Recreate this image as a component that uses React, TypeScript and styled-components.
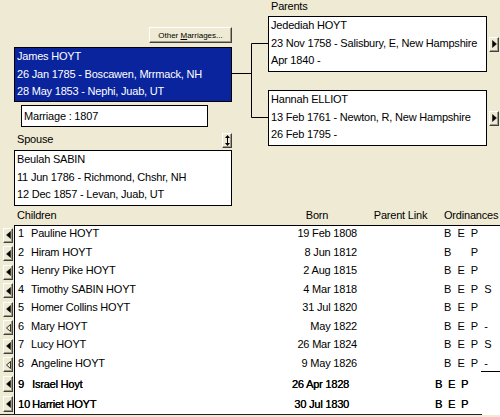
import React, {FC} from 'react';
import styled, {createGlobalStyle} from 'styled-components';

const GlobalStyle = createGlobalStyle`
  html, body {
    margin: 0;
    padding: 0;
    background: #efead3;
  }
`

interface Child {
    n: number;
    name: string;
    born: string;
    ord: string[];
    hollow?: boolean;
    cut?: boolean;
}

const children: Child[] = [
    {n: 1, name: 'Pauline HOYT', born: '19 Feb 1808', ord: ['B', 'E', 'P']},
    {n: 2, name: 'Hiram HOYT', born: '8 Jun 1812', ord: ['B', '', 'P']},
    {n: 3, name: 'Henry Pike HOYT', born: '2 Aug 1815', ord: ['B', 'E', 'P']},
    {n: 4, name: 'Timothy SABIN HOYT', born: '4 Mar 1818', ord: ['B', 'E', 'P', 'S']},
    {n: 5, name: 'Homer Collins HOYT', born: '31 Jul 1820', ord: ['B', 'E', 'P']},
    {n: 6, name: 'Mary HOYT', born: 'May 1822', ord: ['B', 'E', 'P', '-'], hollow: true},
    {n: 7, name: 'Lucy HOYT', born: '26 Mar 1824', ord: ['B', 'E', 'P', 'S']},
    {n: 8, name: 'Angeline HOYT', born: '9 May 1826', ord: ['B', 'E', 'P', '-'], hollow: true, cut: true},
]

// last two rows sit a little off the rest, like a pasted strip
const extraChildren: Child[] = [
    {n: 9, name: 'Israel Hoyt', born: '26 Apr 1828', ord: ['B', 'E', 'P']},
    {n: 10, name: 'Harriet HOYT', born: '30 Jul 1830', ord: ['B', 'E', 'P']},
]

const ArrowIcon: FC<{dir: 'left' | 'right'; hollow?: boolean}> = ({dir, hollow}) => (
    <svg width="5" height="8" viewBox="0 0 5 8">
        <polygon
            points={dir === 'left' ? '4.5,0.5 0.5,4 4.5,7.5' : '0.5,0.5 4.5,4 0.5,7.5'}
            fill={hollow ? 'none' : '#000'}
            stroke="#000"
            strokeWidth={hollow ? 0.8 : 0.5}
        />
    </svg>
)

const UpDownIcon: FC = () => (
    <svg width="5" height="11" viewBox="0 0 5 11">
        <polygon points="2.5,0 5,3 0,3" fill="#000"/>
        <rect x="2" y="3" width="1" height="5" fill="#000"/>
        <polygon points="0,8 5,8 2.5,11" fill="#000"/>
    </svg>
)

const App: FC = () => {
    return (
        <>
            <GlobalStyle/>
            <Window>
                <Top>
                    <LeftCol>
                        <ButtonRow>
                            <OtherButton><span>Other <u>M</u>arriages...</span></OtherButton>
                        </ButtonRow>
                        <PersonBox $selected>
                            <div>James HOYT</div>
                            <div>26 Jan 1785 - Boscawen, Mrrmack, NH</div>
                            <div>28 May 1853 - Nephi, Juab, UT</div>
                        </PersonBox>
                        <MarriageBox>Marriage : 1807</MarriageBox>
                        <SpouseBar>
                            <Label>Spouse</Label>
                            <SmallButton $h={15}><UpDownIcon/></SmallButton>
                        </SpouseBar>
                        <PersonBox $top={2}>
                            <div>Beulah SABIN</div>
                            <div>11 Jun 1786 - Richmond, Chshr, NH</div>
                            <div>12 Dec 1857 - Levan, Juab, UT</div>
                        </PersonBox>
                    </LeftCol>
                    <Connector>
                        <svg width="36" height="150" viewBox="0 0 36 150">
                            <path d="M0 73.5 H19.5 M19.5 43.5 V117.5 M19.5 43.5 H36 M19.5 117.5 H36"
                                  stroke="#000" strokeWidth="1" fill="none"/>
                        </svg>
                    </Connector>
                    <RightCol>
                        <Label $h={16}>Parents</Label>
                        <ParentRow>
                            <PersonBox $w={219} $top={0}>
                                <div>Jedediah HOYT</div>
                                <div>23 Nov 1758 - Salisbury, E, New Hampshire</div>
                                <div>Apr 1840 -</div>
                            </PersonBox>
                            <SmallButton $h={15}><ArrowIcon dir="right"/></SmallButton>
                        </ParentRow>
                        <ParentRow $top={18}>
                            <PersonBox $w={219} $top={0}>
                                <div>Hannah ELLIOT</div>
                                <div>13 Feb 1761 - Newton, R, New Hampshire</div>
                                <div>26 Feb 1795 -</div>
                            </PersonBox>
                            <SmallButton $h={15}><ArrowIcon dir="right"/></SmallButton>
                        </ParentRow>
                    </RightCol>
                </Top>

                <ChildHeader>
                    <HeadCell $span={2}>Children</HeadCell>
                    <HeadCell $align="center">Born</HeadCell>
                    <HeadCell $align="center">Parent Link</HeadCell>
                    <HeadCell>Ordinances</HeadCell>
                </ChildHeader>
                <TopRule/>
                {children.map(c => (
                    <ChildRow key={c.n}>
                        <ArrowCell>
                            <SmallButton $h={15}><ArrowIcon dir="left" hollow={c.hollow}/></SmallButton>
                        </ArrowCell>
                        <RowBody $cut={c.cut}>
                            <NumCell>{c.n}</NumCell>
                            <NameCell>{c.name}</NameCell>
                            <BornCell>{c.born}</BornCell>
                            <div/>
                            <OrdCell>
                                {c.ord.map((o, i) => <Ord key={i}>{o}</Ord>)}
                            </OrdCell>
                        </RowBody>
                    </ChildRow>
                ))}
                {extraChildren.map(c => (
                    <ChildRow key={c.n} $extra>
                        <ArrowCell>
                            <SmallButton $h={16}><ArrowIcon dir="left"/></SmallButton>
                        </ArrowCell>
                        <RowBody $extra>
                            <NumCell>{c.n}</NumCell>
                            <NameCell>{c.name}</NameCell>
                            <BornCell>{c.born}</BornCell>
                            <div/>
                            <OrdCell>
                                {c.ord.map((o, i) => <Ord key={i} $extra>{o}</Ord>)}
                            </OrdCell>
                        </RowBody>
                    </ChildRow>
                ))}
                <BottomRule/>
            </Window>
        </>
    );
};

export default App;


const Window = styled.div`
  width: 500px;
  height: 417px;
  overflow: hidden;
  background: #efead3;
  font-family: "Liberation Sans", Arial, sans-serif;
  font-size: 11px;
  letter-spacing: -0.2px;
  color: #000;
  display: flex;
  flex-direction: column;
`
const Top = styled.div`
  display: flex;
  height: 209px;
  padding-left: 14px;
`
const LeftCol = styled.div`
  width: 218px;
  display: flex;
  flex-direction: column;
`
const ButtonRow = styled.div`
  display: flex;
  justify-content: flex-end;
  padding-top: 27px;
`
const OtherButton = styled.button`
  width: 83px;
  height: 16px;
  box-sizing: border-box;
  padding: 0;
  margin: 0;
  background: #efead3;
  border: 1px solid;
  border-color: #fff #404040 #404040 #fff;
  box-shadow: inset -1px -1px #9d9a88;
  font-family: "Liberation Sans", Arial, sans-serif;
  font-size: 8px;
  letter-spacing: 0;
  color: #000;
  display: flex;
  align-items: center;
  justify-content: center;
  white-space: pre;
  u {
    text-decoration: underline;
  }
`
const PersonBox = styled.div<{$selected?: boolean; $w?: number; $top?: number}>`
  width: ${p => p.$w ?? 218}px;
  height: ${p => p.$selected ? 55 : 56}px;
  margin-top: ${p => p.$top ?? 4}px;
  box-sizing: border-box;
  border: 1px solid #000;
  background: ${p => p.$selected ? '#0a249e' : '#fff'};
  color: ${p => p.$selected ? '#fff' : '#000'};
  padding: 0 0 0 2px;
  line-height: 17.5px;
  white-space: nowrap;
  overflow: hidden;
`
const MarriageBox = styled.div`
  width: 187px;
  height: 22px;
  margin: 3px 0 0 7px;
  box-sizing: border-box;
  border: 1px solid #000;
  background: #fff;
  padding-left: 2px;
  line-height: 20px;
`
const SpouseBar = styled.div`
  display: flex;
  justify-content: space-between;
  align-items: flex-end;
  height: 16px;
  margin-top: 5px;
  padding-left: 3px;
`
const Label = styled.div<{$h?: number}>`
  line-height: 13px;
  height: ${p => p.$h ?? 14}px;
  padding-left: ${p => p.$h ? 3 : 0}px;
  align-self: flex-start;
  margin-top: ${p => p.$h ? 0 : 1}px;
`
const SmallButton = styled.div<{$h: number}>`
  width: 10px;
  height: ${p => p.$h}px;
  flex-shrink: 0;
  box-sizing: border-box;
  background: #efead3;
  border: 1px solid;
  border-color: #fff #404040 #404040 #fff;
  box-shadow: inset -1px -1px #9d9a88;
  display: flex;
  align-items: center;
  justify-content: center;
`
const Connector = styled.div`
  width: 36px;
  flex-shrink: 0;
  svg {
    display: block;
  }
`
const RightCol = styled.div`
  flex: 1;
  display: flex;
  flex-direction: column;
`
const ParentRow = styled.div<{$top?: number}>`
  display: flex;
  align-items: center;
  gap: 2px;
  margin-top: ${p => p.$top ?? 0}px;
`
const cols = '16px 246px 80px 87px 56px'
const extraCols = '17px 245px 72px 86px 1fr'

const ChildHeader = styled.div`
  display: grid;
  grid-template-columns: ${cols};
  margin-left: 15px;
  height: 16px;
  line-height: 13px;
  white-space: nowrap;
`
const HeadCell = styled.div<{$span?: number; $align?: string}>`
  grid-column: span ${p => p.$span ?? 1};
  text-align: ${p => p.$align ?? 'left'};
  padding-left: ${p => p.$span ? 2 : 0}px;
`
const TopRule = styled.div`
  margin-left: 14px;
  height: 1px;
  background: #000;
`
const ChildRow = styled.div<{$extra?: boolean}>`
  display: flex;
  height: ${p => p.$extra ? 20 : 18.5}px;
`
const ArrowCell = styled.div`
  width: 14px;
  flex-shrink: 0;
  box-sizing: border-box;
  padding-left: 3px;
  display: flex;
  align-items: center;
`
const RowBody = styled.div<{$extra?: boolean; $cut?: boolean}>`
  flex: 1;
  position: relative;
  background: #fff;
  border-left: 1px solid #000;
  display: grid;
  grid-template-columns: ${p => p.$extra ? extraCols : cols};
  align-items: start;
  padding-top: 1px;
  line-height: ${p => p.$extra ? 19 : 13}px;
  white-space: nowrap;
  ${p => p.$extra ? 'text-shadow: 0.3px 0 0 #000;' : ''}
  ${p => p.$cut ? `
    &::after {
      content: '';
      position: absolute;
      right: 0;
      bottom: 2px;
      width: 19px;
      height: 1px;
      background: #000;
    }
  ` : ''}
`
const NumCell = styled.div`
  padding-left: 3px;
`
const NameCell = styled.div`
  overflow: hidden;
`
const BornCell = styled.div`
  text-align: right;
`
const OrdCell = styled.div`
  display: flex;
`
const Ord = styled.span<{$extra?: boolean}>`
  display: inline-block;
  width: ${p => p.$extra ? 13 : 13.4}px;
`
const BottomRule = styled.div`
  height: 1px;
  background: linear-gradient(to right, #222 482px, #fff 482px);
`
